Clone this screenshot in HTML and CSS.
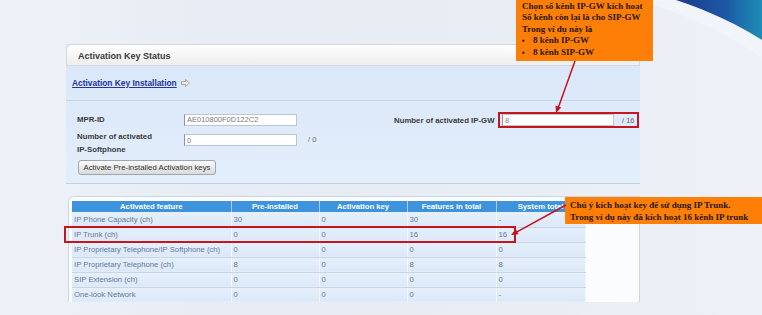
FILE: index.html
```html
<!DOCTYPE html>
<html lang="vi">
<head>
 <meta charset="UTF-8">
 <title>Activation Key Status</title>
 <link rel="stylesheet" href="styles.css">
</head>
<body>
 <div class="slide">
  <svg class="swoosh" width="762" height="80" viewBox="0 0 762 80">
   <defs>
    <linearGradient id="sw" x1="0" y1="0" x2="1" y2="0">
     <stop offset="0" stop-color="#1b3a8a"/>
     <stop offset="0.6" stop-color="#1c5aa6"/>
     <stop offset="1" stop-color="#1d8fb6"/>
    </linearGradient>
   </defs>
   <path d="M640,0 C695,18 735,38 762,58 L762,40 C740,26 712,12 676,0 Z" fill="#f1f5fa"/>
   <path d="M676,0 L762,0 L762,40 C740,26 712,12 676,0 Z" fill="url(#sw)"/>
  </svg>

  <section class="panel status">
   <h2 class="panel-head">Activation Key Status</h2>
   <div class="link-row">
    <a href="#">Activation Key Installation</a>
    <svg class="go" width="9" height="8" viewBox="0 0 9 8"><path d="M0.5,2.5 H4.5 V0.5 L8.5,4 L4.5,7.5 V5.5 H0.5 Z" fill="#ececec" stroke="#9a9a9a" stroke-width="0.8"/></svg>
   </div>
   <div class="form">
    <div class="col">
     <div class="field one">
      <label>MPR-ID</label>
      <input type="text" value="AE010800F0D122C2" readonly>
     </div>
     <div class="field two">
      <label>Number of activated<br>IP-Softphone</label>
      <input type="text" value="0">
      <span class="max">/ 0</span>
     </div>
     <button>Activate Pre-installed Activation keys</button>
    </div>
    <div class="col">
     <div class="field gw">
      <label>Number of activated IP-GW</label>
      <span class="mark">
       <input type="text" value="8">
       <span class="max">/ 16</span>
      </span>
     </div>
    </div>
   </div>
  </section>

  <section class="panel features">
   <table>
    <colgroup><col class="c1"><col class="c2"><col class="c2"><col class="c3"><col class="c3"></colgroup>
    <thead>
     <tr><th>Activated feature</th><th>Pre-installed</th><th>Activation key</th><th>Features in total</th><th>System total</th></tr>
    </thead>
    <tbody>
     <tr><td>IP Phone Capacity (ch)</td><td>30</td><td>0</td><td>30</td><td>-</td></tr>
     <tr><td>IP Trunk (ch)</td><td>0</td><td>0</td><td>16</td><td>16</td></tr>
     <tr><td>IP Proprietary Telephone/IP Softphone (ch)</td><td>0</td><td>0</td><td>0</td><td>0</td></tr>
     <tr><td>IP Proprietary Telephone (ch)</td><td>8</td><td>0</td><td>8</td><td>8</td></tr>
     <tr><td>SIP Extension (ch)</td><td>0</td><td>0</td><td>0</td><td>0</td></tr>
     <tr><td>One-look Network</td><td>0</td><td>0</td><td>0</td><td>-</td></tr>
    </tbody>
   </table>
  </section>

  <div class="trunk-box"></div>

  <div class="note note-gw">
   <p>Chọn số kênh IP-GW kích hoạt</p>
   <p>Số kênh còn lại là cho SIP-GW</p>
   <p>Trong ví dụ này là</p>
   <p><span class="dot">▪</span>8 kênh IP-GW</p>
   <p><span class="dot">▪</span>8 kênh SIP-GW</p>
  </div>

  <div class="note note-trunk">
   <p>Chú ý kích hoạt key để sử dụng IP Trunk.</p>
   <p>Trong ví dụ này đã kích hoạt 16 kênh IP trunk</p>
  </div>

  <svg class="arrows" width="762" height="315" viewBox="0 0 762 315">
   <line x1="575" y1="61" x2="558.5" y2="107" stroke="#c8101e" stroke-width="1.5"/>
   <polygon points="556,113 561.2,107.4 555.5,105.4" fill="#c8101e"/>
   <line x1="566" y1="205" x2="517" y2="231.8" stroke="#c8101e" stroke-width="1.5"/>
   <polygon points="511,235 518.6,234.3 515.7,229" fill="#c8101e"/>
  </svg>
 </div>
</body>
</html>
```

FILE: styles.css
```css
* {
 box-sizing: border-box;
}

body {
 margin: 0;
 font-family: "Liberation Sans", Arial, sans-serif;
}

.slide {
 position: relative;
 width: 762px;
 height: 315px;
 overflow: hidden;
 padding: 44px 0 0 66px;
 background: linear-gradient(90deg, #eef2f8 0%, #e7ecf4 30%, #e9eef5 70%, #eef1f7 100%);
}

.swoosh {
 position: absolute;
 top: 0;
 left: 0;
}

/* screenshot panels */
.status {
 position: relative;
 width: 574px;
 background: linear-gradient(#d8e6f8, #e3eefb);
 border-bottom: 1px solid #c2d1e3;
}

.panel-head {
 margin: 0;
 height: 22px;
 padding-left: 11px;
 line-height: 22px;
 font-size: 9px;
 font-weight: bold;
 color: #3a3a3a;
 background: linear-gradient(#ffffff, #ededed);
 border: 1px solid #d3d9e2;
 border-radius: 6px 0 0 0;
}

.link-row {
 display: flex;
 align-items: center;
 gap: 4px;
 height: 35px;
 padding-left: 6px;
 border-bottom: 1px solid #c6d5e8;
}

.link-row a {
 font-size: 8.4px;
 font-weight: bold;
 color: #25339c;
}

.form {
 display: flex;
 padding: 12px 0 8px 11px;
}

.col {
 display: flex;
 flex-direction: column;
}

.col:first-child {
 width: 317px;
}

.field {
 display: flex;
 align-items: center;
}

.field label {
 font-size: 7.8px;
 font-weight: bold;
 color: #3a3a3a;
 line-height: 13px;
}

.field.one label,
.field.two label {
 width: 107px;
}

.field.one {
 height: 13px;
}

.field.two {
 align-items: flex-start;
 margin-top: 4px;
 height: 26px;
}

.field.two input {
 margin-top: 4px;
}

.field.two .max {
 margin-top: 4px;
 line-height: 11px;
}

.field input {
 width: 113px;
 height: 12px;
 padding: 0 2px;
 border: 1px solid #bcc6d2;
 border-left-color: #8a94a2;
 background: #fff;
 font-family: "Liberation Sans", Arial, sans-serif;
 font-size: 7.5px;
 color: #7a7a7a;
}

.max {
 margin-left: 11px;
 font-size: 7.5px;
 color: #666;
}

.col button {
 align-self: flex-start;
 margin: 4px 0 0 1px;
 height: 15px;
 width: 138px;
 padding: 0;
 border: 1px solid #9ea6b2;
 border-radius: 3px;
 background: linear-gradient(#fbfbfb, #dadada);
 font-family: "Liberation Sans", Arial, sans-serif;
 font-size: 7.8px;
 color: #333;
}

.field.gw label {
 width: 104px;
}

.field.gw {
 margin-top: -1px;
}

.mark {
 display: flex;
 align-items: center;
 width: 141px;
 height: 16px;
 border: 2px solid #c4161c;
 background: #dfeafa;
}

.mark input {
 width: 112px;
 margin-left: 2px;
}

.mark .max {
 margin-left: 8px;
}

.features {
 width: 572px;
 height: 106px;
 margin: 12px 0 0 2px;
 padding: 4px 0 0 3px;
 overflow: hidden;
 background: #fbfcfe;
 border: 1px solid #cdd6e0;
 border-bottom: none;
 border-radius: 6px 0 0 0;
}

.features table {
 width: 513px;
 table-layout: fixed;
 border-collapse: collapse;
}

.c1 { width: 159px; }
.c2 { width: 88px; }
.c3 { width: 89px; }

.features th {
 height: 11px;
 padding: 0;
 line-height: 10px;
 background: #3e94dc;
 color: #fff;
 font-size: 7.7px;
 font-weight: bold;
 border-right: 1px solid #a8cdee;
}

.features td {
 height: 15px;
 padding: 0 2px;
 background: linear-gradient(#e6f0fb, #dbe8f8);
 color: #62779a;
 font-size: 7.7px;
 white-space: nowrap;
 border-bottom: 1px solid #c7d5e6;
 border-right: 1px solid #f3f7fc;
}

/* annotations on top of the screenshot */
.trunk-box {
 position: absolute;
 left: 64px;
 top: 226px;
 width: 452px;
 height: 17px;
 border: 2px solid #c4161c;
}

.note {
 position: absolute;
 background: #fd7f07;
 color: #2a1606;
 font-family: "Liberation Serif", "Times New Roman", serif;
 font-weight: bold;
 font-size: 9px;
}

.note p {
 margin: 0;
}

.note-gw {
 left: 516px;
 top: -2px;
 width: 137px;
 height: 63px;
 padding: 3px 0 0 6px;
 line-height: 11.4px;
}

.dot {
 display: inline-block;
 width: 11px;
 font-size: 8px;
}

.note-trunk {
 left: 565px;
 top: 197px;
 width: 200px;
 height: 27px;
 padding: 2px 0 0 5px;
 line-height: 12px;
}

.arrows {
 position: absolute;
 top: 0;
 left: 0;
 pointer-events: none;
}
```
